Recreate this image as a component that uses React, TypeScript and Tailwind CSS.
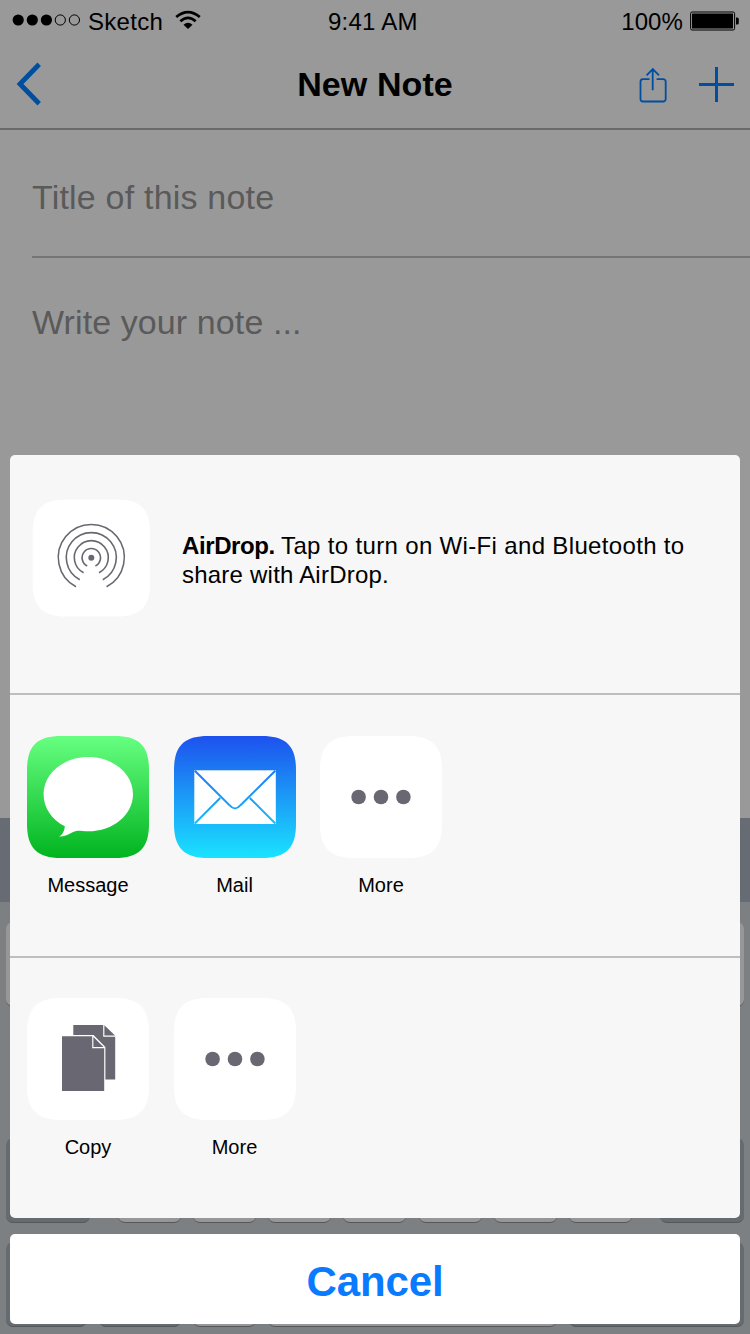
import type { ReactNode } from "react";

const letterKeys = ["a", "b", "c", "d", "e", "f", "g", "h", "i", "j"];

function Key({ className }: { className: string }) {
  return <div className={`h-[85px] rounded-[7px] border-b border-[#55585b] ${className}`} />;
}

const light = "bg-[#979797]";
const dark = "bg-[#666b70]";

function Keyboard() {
  return (
    <div className="h-[516px] bg-[#7d8083]">
      <div className="h-[84px] bg-[#676b74]" />
      <div className="flex flex-col gap-[23px] px-[6px] pt-[20px]">
        <div className="flex justify-between">
          {letterKeys.map((k) => (
            <Key key={k} className={`w-[63px] ${light}`} />
          ))}
        </div>
        <div className="flex justify-between px-[38px]">
          {letterKeys.slice(0, 9).map((k) => (
            <Key key={k} className={`w-[63px] ${light}`} />
          ))}
        </div>
        <div className="flex justify-between">
          <Key className={`w-[84px] ${dark}`} />
          <div className="flex w-[514px] justify-between">
            {letterKeys.slice(0, 7).map((k) => (
              <Key key={k} className={`w-[63px] ${light}`} />
            ))}
          </div>
          <Key className={`w-[84px] ${dark}`} />
        </div>
        <div className="-mt-[4px] flex gap-[12px]">
          <Key className={`w-[81px] ${dark}`} />
          <Key className={`w-[82px] ${dark}`} />
          <Key className={`w-[63px] ${light}`} />
          <Key className={`w-[289px] ${light}`} />
          <Key className={`flex-1 ${dark}`} />
        </div>
      </div>
    </div>
  );
}

function StatusBar() {
  return (
    <div className="flex h-[40px] items-center pl-[12px] pr-[10px] pt-[3px] text-[24px] leading-[28px]">
      <svg className="-mt-[3px]" width="70" height="16" viewBox="0 0 70 16">
        <circle cx="6.2" cy="8" r="5.6" />
        <circle cx="20.3" cy="8" r="5.6" />
        <circle cx="34.4" cy="8" r="5.6" />
        <circle cx="48.3" cy="8" r="5.1" fill="none" stroke="#000" />
        <circle cx="62.4" cy="8" r="5.1" fill="none" stroke="#000" />
      </svg>
      <span className="ml-[6px] w-[87px] tracking-[0.3px]">Sketch</span>
      <svg className="-mt-[3px]" width="26" height="20" viewBox="0 0 26 20">
        <path d="M1.2 7Q13 -2.800 24.800 7" fill="none" stroke="#000" strokeWidth="2.800" />
        <path d="M5.300 11.300Q13 4.300 20.700 11.300" fill="none" stroke="#000" strokeWidth="2.700" />
        <path d="M8.500 14.800Q13 10.600 17.500 14.800L13 19Z" />
      </svg>
      <span className="ml-[127px] tracking-[0.25px]">9:41 AM</span>
      <span className="ml-auto tracking-[0.1px]">100%</span>
      <svg className="-mt-[2px] ml-[7px]" width="50" height="20" viewBox="0 0 50 20">
        <rect x="0.600" y="1" width="44" height="18" rx="1.500" fill="none" stroke="#000" />
        <rect x="2" y="2.500" width="41" height="15" rx="0.500" />
        <path d="M46 6.500h1.200a1.600 1.600 0 0 1 1.600 1.600v3.800a1.600 1.600 0 0 1-1.600 1.600H46z" />
      </svg>
    </div>
  );
}

function NavBar() {
  return (
    <div className="flex h-[90px] items-center border-b-2 border-[#6a6a6a] px-[16px]">
      <svg className="-ml-[1px]" width="97" height="44" viewBox="0 0 97 44">
        <path d="M24.200 2.300L5 22L24.200 41.700" fill="none" stroke="#004ea0" strokeWidth="4.800" />
      </svg>
      <h1 className="flex-1 text-center text-[34px] font-bold leading-[40px] tracking-[0.1px]">New Note</h1>
      <svg width="96" height="40" viewBox="0 0 96 40" fill="none" stroke="#004ea0">
        <path
          d="M12 14.800H5.400a2.500 2.500 0 0 0-2.500 2.500v17.400a2.500 2.500 0 0 0 2.500 2.500h20.200a2.500 2.500 0 0 0 2.500-2.500V17.300a2.500 2.500 0 0 0-2.500-2.500H19M15.100 26V6M9 11l6.200-6.200 6.200 6.200"
          transform="translate(-.4 0.300)"
          strokeWidth="1.800"
        />
        <path d="M61 20.500h35M78.500 3v35" strokeWidth="3" />
      </svg>
    </div>
  );
}

function Tile({ label, children }: { label: string; children: ReactNode }) {
  return (
    <div className="flex w-[122px] flex-col items-center">
      {children}
      <span className="mt-[15px] text-[20px] leading-[24px]">{label}</span>
    </div>
  );
}

const squircle =
  "M34 0H88C112 0 122 10 122 34V88C122 112 112 122 88 122H34C10 122 0 112 0 88V34C0 10 10 0 34 0Z";

function MoreIcon() {
  return (
    <svg width="122" height="122" viewBox="0 0 122 122">
      <path d={squircle} fill="#fff" />
      <g fill="#696872">
        <circle cx="38.600" cy="61" r="7.300" />
        <circle cx="61" cy="61" r="7.300" />
        <circle cx="83.400" cy="61" r="7.300" />
      </g>
    </svg>
  );
}

function MessageIcon() {
  return (
    <svg width="122" height="122" viewBox="0 0 122 122">
      <defs>
        <linearGradient id="green" x1="0" y1="0" x2="0" y2="1">
          <stop offset="0" stopColor="#67ff81" />
          <stop offset="1" stopColor="#01b41f" />
        </linearGradient>
      </defs>
      <path d={squircle} fill="url(#green)" />
      <path
        d="M61.300 21C86 21 106 37.500 106 58.200S86 95.300 61.300 95.300C57.500 95.300 54 94.700 50.500 94.700C44 95.500 40 101 32 100.500C36 98.500 37.500 94 37.800 90.200C25 84 16.600 72 16.600 58.200C16.600 37.500 36.600 21 61.300 21Z"
        fill="#fff"
      />
    </svg>
  );
}

function MailIcon() {
  return (
    <svg width="122" height="122" viewBox="0 0 122 122">
      <defs>
        <linearGradient id="blue" gradientUnits="userSpaceOnUse" x1="0" y1="0" x2="0" y2="122">
          <stop offset="0" stopColor="#1d51ee" />
          <stop offset="1" stopColor="#1ae3ff" />
        </linearGradient>
      </defs>
      <path d={squircle} fill="url(#blue)" />
      <rect x="20.300" y="34.300" width="81.500" height="53.700" fill="#fff" />
      <path
        d="M20.800 34.800L55.500 69.200Q61 75.800 66.500 69.200L101.300 34.800M20.800 87.500L46.200 62M101.300 87.500L75.800 62"
        fill="none"
        stroke="url(#blue)"
        strokeWidth="2"
      />
    </svg>
  );
}

function CopyIcon() {
  return (
    <svg width="122" height="122" viewBox="0 0 122 122">
      <path d={squircle} fill="#fff" />
      <path d="M46.300 27H76.200V38.800H88.200V81.600H78.400V49L66.500 37H46.300Z" fill="#696872" />
      <path d="M77.400 27.300L88 37.600H77.400Z" fill="#696872" />
      <path d="M35 38.200H65.200V50.200H77.200V93H35Z" fill="#696872" />
      <path d="M66.400 38.900L76.500 49H66.400Z" fill="#696872" />
    </svg>
  );
}

function AirDropIcon() {
  return (
    <svg width="118" height="118" viewBox="0 0 118 118">
      <path
        d="M34 0.500H85C108 0.500 118 10 118 33V85C118 108 108 117.500 85 117.500H34C11 117.500 0.700 108 0.700 85V33C0.700 10 11 0.500 34 0.500Z"
        fill="#fff"
      />
      <g transform="translate(0.300 0)">
        <circle cx="59" cy="58.700" r="3" fill="#696872" />
        <g fill="none" stroke="#696872" strokeWidth="1.600">
          <path d="M54.900 67A9.200 9.200 0 1 1 63.100 67" />
          <path d="M51.300 73.800A17 17 0 1 1 66.700 73.800" />
          <path d="M47.500 80.800A25 25 0 1 1 70.500 80.800" />
          <path d="M43.700 87.700A33 33 0 1 1 74.300 87.700" />
        </g>
      </g>
    </svg>
  );
}

function ShareSheet() {
  return (
    <div className="absolute left-[10px] top-[455px] flex w-[730px] flex-col gap-[16px]">
      <div className="h-[763px] overflow-hidden rounded-[5px] bg-[#f7f7f7]">
        <div className="flex h-[240px] border-b-2 border-[#bdbebe] pl-[22px] pt-[44px]">
          <AirDropIcon />
          <p className="ml-[32px] mt-[32px] whitespace-nowrap text-[24px] leading-[29px] tracking-[0.22px]">
            <b className="tracking-[-0.400px]">AirDrop. </b>
            <span className="tracking-[0.340px]">Tap to turn on Wi-Fi and Bluetooth to</span>
            <br />
            share with AirDrop.
          </p>
        </div>
        <div className="flex h-[263px] gap-[24.500px] border-b-2 border-[#bdbebe] pl-[17px] pt-[41px]">
          <Tile label="Message"><MessageIcon /></Tile>
          <Tile label="Mail"><MailIcon /></Tile>
          <Tile label="More"><MoreIcon /></Tile>
        </div>
        <div className="flex gap-[24.500px] pl-[17px] pt-[40px]">
          <Tile label="Copy"><CopyIcon /></Tile>
          <Tile label="More"><MoreIcon /></Tile>
        </div>
      </div>
      <button className="h-[90px] rounded-[5px] bg-white pt-[5px] text-[42px] font-bold leading-[48px] tracking-[-0.150px] text-[#0a7aff]">
        Cancel
      </button>
    </div>
  );
}

export default function App() {
  return (
    <div className="relative h-[1334px] w-[750px] overflow-hidden bg-[#999999] font-['Liberation_Sans',Arial,sans-serif] text-black">
      <StatusBar />
      <NavBar />
      <div className="flex h-[688px] flex-col pl-[32px] text-[34px] leading-[40px] text-[#5a5a5a]">
        <div className="h-[128px] border-b-2 border-[#757575] pt-[47px] tracking-[0.2px]">Title of this note</div>
        <div className="pt-[44px] tracking-[0.100px]">Write your note ...</div>
      </div>
      <Keyboard />
      <ShareSheet />
    </div>
  );
}
